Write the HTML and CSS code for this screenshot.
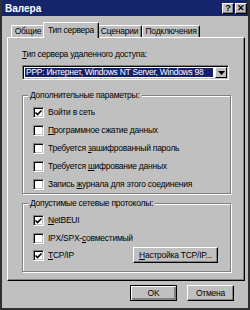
FILE: index.html
```html
<!DOCTYPE html>
<html lang="ru">
<head>
<meta charset="utf-8">
<link rel="stylesheet" href="styles.css">
</head>
<body>
<div class="window">
  <div class="titlebar">
    <span class="title">Валера</span>
    <div class="tbtns">
      <span class="tbtn">?</span>
      <span class="tbtn x">✕</span>
    </div>
  </div>
  <div class="body">
    <div class="tabs">
      <div class="tab t1">Общие</div>
      <div class="tab active">Тип сервера</div>
      <div class="tab t3">Сценарии</div>
      <div class="tab t4">Подключения</div>
    </div>
    <div class="panel">
      <div class="label"><u>Т</u>ип сервера удаленного доступа:</div>
      <div class="select">
        <div class="sel-value">PPP: Интернет, Windows NT Server, Windows 98</div>
        <div class="sel-btn"><svg width="7" height="4" viewBox="0 0 7 4"><path d="M0 0h7L3.5 4z" fill="#000"/></svg></div>
      </div>
      <div class="group g1">
        <span class="legend">Дополнительные параметры:</span>
        <div class="row"><span class="cb on"></span><span>Войти в сеть</span></div>
        <div class="row"><span class="cb"></span><span><u>П</u>рограммное сжатие данных</span></div>
        <div class="row"><span class="cb"></span><span>Требуется <u>з</u>ашифрованный пароль</span></div>
        <div class="row"><span class="cb"></span><span>Требуется <u>ш</u>ифрование данных</span></div>
        <div class="row"><span class="cb"></span><span>Запись <u>ж</u>урнала для этого соединения</span></div>
      </div>
      <div class="group g2">
        <span class="legend">Допустимые сетевые протоколы:</span>
        <div class="row"><span class="cb on"></span><span><u>N</u>etBEUI</span></div>
        <div class="row"><span class="cb"></span><span>IPX/SPX-<u>с</u>овместимый</span></div>
        <div class="row last"><span class="cb on"></span><span><u>T</u>CP/IP</span><span class="btn tcp"><u>Н</u>астройка TCP/IP...</span></div>
      </div>
    </div>
    <div class="footer">
      <span class="btn def">OK</span>
      <span class="btn">Отмена</span>
    </div>
  </div>
</div>
</body>
</html>
```

FILE: styles.css
```css
html, body {
  margin: 0;
  padding: 0;
  background: #c0c0c0;
}
.window {
  width: 250px;
  height: 310px;
  box-sizing: border-box;
  background: #c0c0c0;
  border-left: 2px solid #303030;
  border-right: 2px solid #303030;
  border-bottom: 2px solid #303030;
  display: flex;
  flex-direction: column;
  font-family: "Liberation Sans", Arial, sans-serif;
  font-size: 8.5px;
  letter-spacing: -0.25px;
  color: #000;
  overflow: hidden;
}
.titlebar {
  height: 16px;
  margin: 0 -2px;
  background: #15256c;
  display: flex;
  align-items: center;
  padding: 0 3px 0 5px;
}
.title {
  color: #fff;
  font-weight: bold;
  font-size: 10px;
  letter-spacing: 0;
}
.tbtns {
  margin-left: auto;
  display: flex;
  gap: 1px;
}
.tbtn {
  width: 12px;
  height: 11px;
  box-sizing: border-box;
  background: #c0c0c0;
  border-top: 1px solid #fff;
  border-left: 1px solid #fff;
  border-right: 1px solid #000;
  border-bottom: 1px solid #000;
  box-shadow: inset -1px -1px 0 #808080;
  font-size: 9px;
  font-weight: bold;
  line-height: 9px;
  text-align: center;
  letter-spacing: 0;
}
.body {
  flex: 1;
  display: flex;
  flex-direction: column;
  padding: 6px 3px 0 5px;
}
.tabs {
  display: flex;
  padding-left: 4px;
  height: 15px;
  position: relative;
  z-index: 1;
}
.tab {
  margin-top: 3px;
  height: 12px;
  box-sizing: border-box;
  border-top: 1px solid #fff;
  border-left: 1px solid #fff;
  border-right: 1px solid #000;
  border-radius: 2px 2px 0 0;
  box-shadow: inset -1px 0 0 #808080;
  line-height: 11px;
  text-align: center;
  background: #c0c0c0;
}
.t1 { width: 34px; }
.t3 { width: 45px; }
.t4 { width: 58px; }
.tab.active {
  position: relative;
  z-index: 2;
  width: 56px;
  margin: 0 -2px;
  height: 16px;
  padding-top: 2px;
}
.panel {
  flex: 0 0 244px;
  box-sizing: border-box;
  border-top: 1px solid #fff;
  border-left: 1px solid #fff;
  border-right: 1px solid #000;
  border-bottom: 1px solid #000;
  box-shadow: inset -1px -1px 0 #808080;
  padding: 11px 0 0 14px;
  display: flex;
  flex-direction: column;
  align-items: flex-start;
}
.label {
  height: 11px;
  line-height: 11px;
}
.select {
  margin-top: 5px;
  width: 207px;
  height: 15px;
  box-sizing: border-box;
  background: #fff;
  border-top: 1px solid #808080;
  border-left: 1px solid #808080;
  border-right: 1px solid #fff;
  border-bottom: 1px solid #fff;
  box-shadow: inset 1px 1px 0 #000, inset -1px -1px 0 #c0c0c0;
  display: flex;
  padding: 2px;
}
.sel-value {
  flex: 1;
  background: #15206a;
  color: #fff;
  line-height: 9px;
  padding-left: 1px;
  margin-right: 2px;
  white-space: nowrap;
  overflow: hidden;
}
.sel-btn {
  width: 12px;
  box-sizing: border-box;
  margin: -1px -1px -1px 0;
  background: #c0c0c0;
  border-top: 1px solid #fff;
  border-left: 1px solid #fff;
  border-right: 1px solid #000;
  border-bottom: 1px solid #000;
  display: flex;
  align-items: center;
  justify-content: center;
}
.group {
  position: relative;
  width: 209px;
  box-sizing: border-box;
  border: 1px solid #808080;
  box-shadow: inset 1px 1px 0 #fff, 1px 1px 0 #fff;
  padding: 7px 0 0 10px;
}
.g1 {
  margin-top: 15px;
  height: 99px;
}
.g2 {
  margin-top: 9px;
  height: 69px;
}
.legend {
  position: absolute;
  top: -6px;
  left: 5px;
  padding: 0 2px;
  background: #c0c0c0;
  line-height: 11px;
}
.row {
  height: 18px;
  display: flex;
  align-items: center;
  white-space: nowrap;
}
.row.last {
  height: 16px;
}
.cb {
  width: 11px;
  height: 11px;
  box-sizing: border-box;
  margin-right: 4px;
  background: #fff;
  border-top: 1px solid #808080;
  border-left: 1px solid #808080;
  border-right: 1px solid #fff;
  border-bottom: 1px solid #fff;
  box-shadow: inset 1px 1px 0 #000, inset -1px -1px 0 #c0c0c0;
}
.cb.on {
  background-image: url("data:image/svg+xml;utf8,<svg xmlns='http://www.w3.org/2000/svg' width='9' height='9' viewBox='0 0 9 9'><path d='M1.5 3.5l2 2 4-4' fill='none' stroke='black' stroke-width='1.6'/></svg>");
  background-repeat: no-repeat;
  background-position: 0 1px;
}
.btn {
  display: inline-flex;
  align-items: center;
  justify-content: center;
  box-sizing: border-box;
  height: 16px;
  background: #c0c0c0;
  border-top: 1px solid #fff;
  border-left: 1px solid #fff;
  border-right: 1px solid #000;
  border-bottom: 1px solid #000;
  box-shadow: inset -1px -1px 0 #808080;
}
.btn.tcp {
  width: 85px;
  margin-left: auto;
  margin-right: 12px;
}
.footer {
  display: flex;
  justify-content: flex-end;
  gap: 10px;
  padding: 4px 11px 0 0;
}
.footer .btn {
  width: 47px;
}
.btn.def {
  border: 1px solid #000;
  box-shadow: inset 1px 1px 0 #fff, inset -2px -2px 0 #808080, inset -1px -1px 0 #000;
}
u {
  text-decoration: underline;
  text-underline-offset: 1px;
}
```
